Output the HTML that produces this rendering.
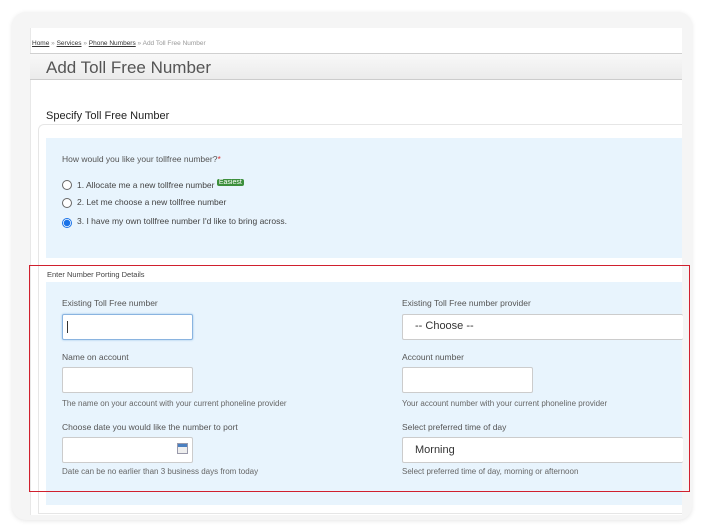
<!DOCTYPE html>
<html><head><meta charset="utf-8"><style>
*{box-sizing:border-box;margin:0;padding:0}
body{width:704px;height:532px;background:#fff;font-family:"Liberation Sans",sans-serif;position:relative;overflow:hidden;color:#555}
.frame{position:absolute;left:12px;top:12px;width:680px;height:508px;border-radius:14px;background:#f5f5f5;box-shadow:0 1px 5px rgba(0,0,0,.10)}
.content{position:absolute;left:30px;top:28px;width:652px;height:487px;background:#fff;border-left:1px solid #e8e8e8}
.a{position:absolute}
.bc{left:32px;top:40px;font-size:6.5px;color:#999}
.bc u{color:#333}
.title{left:30px;top:53px;width:652px;height:27px;background:linear-gradient(#f8f8f8,#ebebeb);border-top:1px solid #d0d0d0;border-bottom:1px solid #ccc;font-size:17px;color:#555;padding:4px 0 0 16px}
.h2{left:46px;top:110px;font-size:11px;color:#222}
.box{left:38px;top:124px;width:644px;height:390px;border:1px solid #e6e6e6;border-right:none;border-radius:6px 0 0 0;background:#fff}
.blue{background:#e8f4fd}
.lbl{font-size:8.5px;color:#555}
.r{font-size:8.5px;color:#444}
.rad{position:absolute;width:10px;height:10px;border:1px solid #666;border-radius:50%;background:#fff}
.inp{position:absolute;height:26px;background:#fff;border:1px solid #ccc;border-radius:2px;overflow:hidden}
.help{font-size:8px;color:#666}
.red{left:29px;top:265px;width:661px;height:227px;border:1px solid #d0202e}
</style></head><body>
<div class="frame"></div>
<div class="content"></div>
<div class="a bc"><u>Home</u> » <u>Services</u> » <u>Phone Numbers</u> » Add Toll Free Number</div>
<div class="a title">Add Toll Free Number</div>
<div class="a h2">Specify Toll Free Number</div>
<div class="a box"></div>
<div class="a blue" style="left:46px;top:138px;width:636px;height:120px"></div>
<div class="a lbl" style="left:62px;top:154px">How would you like your tollfree number?<span style="color:#d33">*</span></div>
<div class="rad" style="left:62px;top:180px"></div>
<div class="a r" style="left:77px;top:180px">1. Allocate me a new tollfree number <span style="background:#3c8f3c;color:#fff;font-size:7px;padding:0 2px;border-radius:2px;position:relative;top:-4px">Easiest</span></div>
<div class="rad" style="left:62px;top:198px"></div>
<div class="a r" style="left:77px;top:197px">2. Let me choose a new tollfree number</div>
<div class="rad" style="left:62px;top:218px;border-color:#1a73e8;background:radial-gradient(#1a73e8 0 3px,#fff 3.5px)"></div>
<div class="a r" style="left:77px;top:216px">3. I have my own tollfree number I'd like to bring across.</div>
<div class="a" style="left:47px;top:270px;font-size:7.5px;color:#444">Enter Number Porting Details</div>
<div class="a blue" style="left:46px;top:282px;width:636px;height:223px"></div>
<div class="a lbl" style="left:62px;top:298px">Existing Toll Free number</div>
<div class="inp" style="left:62px;top:314px;width:131px;border-color:#8ab4e0;box-shadow:0 0 2px #9cc4ea"><div style="position:absolute;left:4px;top:6px;width:1px;height:12px;background:#333"></div></div>
<div class="a lbl" style="left:62px;top:352px">Name on account</div>
<div class="inp" style="left:62px;top:367px;width:131px"></div>
<div class="a help" style="left:62px;top:399px">The name on your account with your current phoneline provider</div>
<div class="a lbl" style="left:62px;top:422px">Choose date you would like the number to port</div>
<div class="inp" style="left:62px;top:437px;width:131px"><div style="position:absolute;right:4px;top:5px;width:11px;height:11px;border:1px solid #99a;background:linear-gradient(#4a7fc0 0 3px,#eee 3px)"></div></div>
<div class="a help" style="left:62px;top:467px">Date can be no earlier than 3 business days from today</div>
<div class="a lbl" style="left:402px;top:298px">Existing Toll Free number provider</div>
<div class="inp" style="left:402px;top:314px;width:281px;font-size:11px;color:#333;padding:5px 0 0 12px;border-right:none">-- Choose --</div>
<div class="a lbl" style="left:402px;top:352px">Account number</div>
<div class="inp" style="left:402px;top:367px;width:131px"></div>
<div class="a help" style="left:402px;top:399px">Your account number with your current phoneline provider</div>
<div class="a lbl" style="left:402px;top:422px">Select preferred time of day</div>
<div class="inp" style="left:402px;top:437px;width:281px;font-size:11px;color:#333;padding:6px 0 0 12px;border-right:none">Morning</div>
<div class="a help" style="left:402px;top:467px">Select preferred time of day, morning or afternoon</div>
<div class="a red"></div>
</body></html>
